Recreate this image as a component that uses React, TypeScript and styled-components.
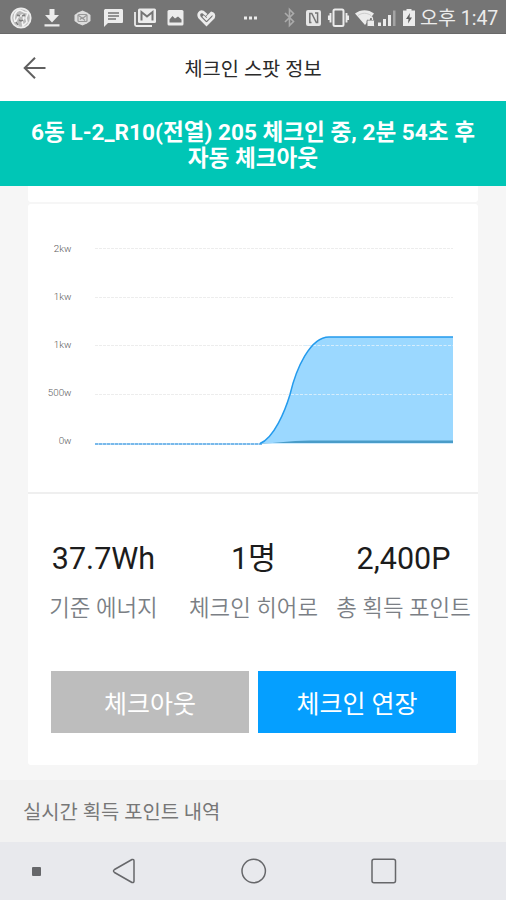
import React from "react";
import styled, { createGlobalStyle } from "styled-components";

const GlobalStyle = createGlobalStyle`
  * { box-sizing: border-box; }
  body { margin: 0; background: #f6f6f6; }
`;

const Screen = styled.div`
  width: 506px;
  height: 900px;
  display: flex;
  flex-direction: column;
  overflow: hidden;
  background: #f6f6f6;
  font-family: Roboto, "Noto Sans CJK KR", sans-serif;
`;

const StatusBar = styled.div`
  height: 34px;
  flex: none;
  display: flex;
  align-items: center;
  background: #757575;
  border-bottom: 1px solid #696969;
  color: #ececec;
`;

const StatusIcon = styled.svg<{ $gap: number }>`
  flex: none;
  height: 22px;
  margin-left: ${(p) => p.$gap}px;
  margin-top: 2px;
  overflow: visible;
`;

const Clock = styled.span`
  margin-left: 5px;
  margin-top: 4px;
  font: 400 19.5px/30px Roboto, "Noto Sans CJK KR", sans-serif;
  white-space: nowrap;
`;

const AppBar = styled.header`
  height: 67px;
  flex: none;
  display: grid;
  grid-template-columns: 70px 1fr 70px;
  align-items: center;
  background: #fff;
`;

const BackButton = styled.button`
  display: flex;
  width: 24px;
  height: 24px;
  margin-left: 22px;
  padding: 0;
  border: 0;
  background: none;
`;

const Title = styled.h1`
  margin: 0;
  padding-top: 4px;
  text-align: center;
  color: #2a2a2a;
  font-size: 19.8px;
  line-height: 28px;
  font-weight: 400;
`;

const Banner = styled.div`
  height: 85px;
  flex: none;
  padding: 19px 20px 0;
  background: #00c6b6;
  color: #fff;
  text-align: center;
  font-size: 22.6px;
  line-height: 26px;
  font-weight: 700;
  white-space: nowrap;
`;

const Content = styled.main`
  height: 594px;
  flex: none;
  padding: 0 28px;
`;

const CardEnd = styled.div`
  height: 16px;
  background: #fff;
  border-radius: 0 0 3px 3px;
`;

const Card = styled.section`
  margin-top: 2px;
  height: 561px;
  background: #fff;
  border-radius: 3px;
`;

const ChartPanel = styled.div`
  height: 290px;
  border-bottom: 2px solid #efefef;
`;

const Chart = styled.svg`
  display: block;
  width: 450px;
  height: 288px;
`;

const ChartLabel = styled.text`
  fill: #5c5c5c;
  font-family: Roboto, sans-serif;
  font-size: 9.8px;
  font-weight: 300;
  text-anchor: end;
`;

const Stats = styled.div`
  display: grid;
  grid-template-columns: 150px 150px 150px;
  padding-top: 46px;
`;

const Stat = styled.div`
  padding-left: 1px;
  text-align: center;
  white-space: nowrap;
`;

const StatValue = styled.div`
  height: 38px;
  color: #1c1c1c;
  font-size: 30.5px;
  line-height: 38px;
  font-weight: 400;
`;

const StatLabel = styled.div`
  margin-top: 15px;
  height: 30px;
  color: #7b7f85;
  font-size: 22.4px;
  line-height: 30px;
  font-weight: 350;
`;

const Actions = styled.div`
  display: grid;
  grid-template-columns: 1fr 1fr;
  gap: 9px;
  margin: 48px 22px 0 23px;
`;

const Action = styled.button<{ $primary?: boolean }>`
  height: 62px;
  padding: 5px 0 0;
  border: 0;
  background: ${(p) => (p.$primary ? "#059fff" : "#bdbdbd")};
  color: #fff;
  font: 400 25px/36px Roboto, "Noto Sans CJK KR", sans-serif;
`;

const SectionTitle = styled.h2`
  height: 62px;
  flex: none;
  margin: 0;
  padding: 2px 0 0 23px;
  background: #f2f2f2;
  color: #777;
  font-size: 19.85px;
  line-height: 62px;
  font-weight: 400;
`;

const NavBar = styled.nav`
  height: 58px;
  flex: none;
  display: flex;
  align-items: center;
  padding-left: 32px;
  background: #e8e9ed;
`;

const NavIcon = styled.svg<{ $gap: number }>`
  flex: none;
  margin-left: ${(p) => p.$gap}px;
  fill: none;
  stroke: #66676a;
  stroke-width: 1.5;
  stroke-linejoin: round;
`;

const ticks = [
  { label: "2kw", line: 44.5, base: 48 },
  { label: "1kw", line: 93.5, base: 96 },
  { label: "1kw", line: 141.5, base: 144 },
  { label: "500w", line: 190.5, base: 192 },
  { label: "0w", line: 239.5, base: 240 },
];

const stats = [
  { value: "37.7Wh", label: "기준 에너지" },
  { value: "1명", label: "체크인 히어로" },
  { value: "2,400P", label: "총 획득 포인트" },
];

const loadCurve = "M232 239.5C246 234 257 207 262 190.5C268 165 282 133 301 133H425";

function StatusIcons() {
  return (
    <>
      <StatusIcon $gap={10} width="22" viewBox="0 0 22 22" fill="none">
        <circle cx="11" cy="11" r="9.7" fill="#b9b9b9" stroke="#ececec" strokeWidth="1.8" />
        <path d="M5 15C3 9 5 4 10 3l4 2 4 1-2 5 1 4-4 4-1-5 2-3-2-3-4 2-2 4 2 5" stroke="#f2f2f2" strokeWidth="1.6" />
        <path d="M7 8l3 1m2 0l3-1M9 13l2 1 2-1M6 15l2 3" stroke="#7e7e7e" strokeWidth="1.4" />
      </StatusIcon>
      <StatusIcon $gap={12} width="16" viewBox="0 0 16 22" fill="currentColor">
        <path d="M5.5 2h5v6H15l-7 7.5L1 8h4.500zM.5 17.300h15v2.200H.5z" />
      </StatusIcon>
      <StatusIcon $gap={14} width="17" viewBox="0 0 17 22">
        <path d="M4 5.500 8.500 3.500 13 5.500 16.500 8v6L13 16.500 8.500 18.500 4 16.500.5 14V8z" fill="#dcdcdc" />
        <rect x="4" y="7.500" width="9" height="7" rx="1" fill="none" stroke="#999" strokeWidth="1.200" />
        <path d="M4 8l4.500 3.500L13 8M6 12.500l2-2 3 3" fill="none" stroke="#999" strokeWidth="1.200" />
      </StatusIcon>
      <StatusIcon $gap={13} width="19" viewBox="0 0 19 22">
        <path d="M2 2h15.500c1 0 1.500.6 1.500 1.500v11c0 1-.5 1.500-1.500 1.500H4l-4 4V3.500C0 2.600.7 2 2 2z" fill="currentColor" />
        <path d="M4 6h11M4 9h11M4 12h8" stroke="#757575" strokeWidth="1.500" />
      </StatusIcon>
      <StatusIcon $gap={11} width="22" viewBox="0 0 22 22">
        <path d="M1 5v12.500c0 1 .5 1.500 1.500 1.500H18" fill="none" stroke="currentColor" strokeWidth="1.800" />
        <rect x="4" y="1.500" width="18" height="14.500" rx="1.500" fill="currentColor" />
        <path d="M7.500 13.500V5l5.500 4.500L18.500 5v8.500" fill="none" stroke="#757575" strokeWidth="2" />
      </StatusIcon>
      <StatusIcon $gap={11} width="17" viewBox="0 0 17 22">
        <rect x=".5" y="3" width="16" height="15.500" rx="1.500" fill="currentColor" />
        <path d="M2.500 15.500v-3L5.500 9l2.500 2.500 3-2 3.500 3v3z" fill="#757575" />
      </StatusIcon>
      <StatusIcon $gap={13} width="19" viewBox="0 0 19 22" fill="none">
        <path d="M10 10.500l4.500-4.500c1.800.4 3 2 2 4.500L9.500 17.500 2.500 10.500C.5 7 3 4 6 5l3.500 3" stroke="currentColor" strokeWidth="2.800" />
        <path d="M6 9l3.500 3.500L15 7" stroke="currentColor" strokeWidth="2" />
      </StatusIcon>
      <StatusIcon $gap={28} width="13" viewBox="0 0 13 22" fill="currentColor">
        <path d="M0 9.500h3v3H0zM5 9.500h3v3H5zM10 9.500h3v3h-3z" />
      </StatusIcon>
      <StatusIcon $gap={27} width="11" viewBox="0 0 11 22" fill="none">
        <path d="M1 6l8.500 8.500L5.500 18.500v-16l4 4L1 15" stroke="#ababab" strokeWidth="1.600" />
      </StatusIcon>
      <StatusIcon $gap={11} width="15" viewBox="0 0 15 22">
        <rect y="3" width="15" height="16" rx="2" fill="#e6e6e6" />
        <path d="M5.500 15.500H3.800V6.500h2l4.500 9h1.300V6H9" fill="none" stroke="#757575" strokeWidth="1.500" />
      </StatusIcon>
      <StatusIcon $gap={7} width="21" viewBox="0 0 21 22" fill="none" stroke="currentColor">
        <rect x="5.500" y="2.500" width="10" height="16.500" rx="1.500" strokeWidth="2" />
        <path d="M2.500 6v9.500M18.500 6v9.500M.9 8.500v4.500M20.100 8.500v4.500" strokeWidth="1.900" />
      </StatusIcon>
      <StatusIcon $gap={6} width="20" viewBox="0 0 20 22">
        <path d="M0 6.500C5.500 2 13.500 2 19 6.500L10 18z" fill="currentColor" />
        <path d="M3 8.500c4-3 9-3 13 0" fill="none" stroke="#c4c4c4" strokeWidth=".8" />
        <rect x="12" y="13" width="7.500" height="6.500" rx="1" fill="#ececec" stroke="#757575" />
        <path d="M14 13v-1.500c0-2 3.500-2 3.500 0V13" fill="none" stroke="#ececec" strokeWidth="1.300" />
      </StatusIcon>
      <StatusIcon $gap={3} width="18" viewBox="0 0 18 22">
        <path d="M0 15.500h3V19H0zM5 12h3v7H5zM10 8h3v11h-3z" fill="currentColor" />
        <path d="M15 3.500h2.500V19H15z" fill="#a4a4a4" />
      </StatusIcon>
      <StatusIcon $gap={7} width="12" viewBox="0 0 12 22">
        <path d="M3.500 2h5v1.500H12V19H0V3.500h3.500z" fill="currentColor" />
        <path d="M7 6l-4 6h2.500L5 16.500l4-6H6.500z" fill="#606060" />
      </StatusIcon>
    </>
  );
}

export default function App() {
  return (
    <Screen>
      <GlobalStyle />
      <StatusBar>
        <StatusIcons />
        <Clock>오후 1:47</Clock>
      </StatusBar>
      <AppBar>
        <BackButton aria-label="뒤로">
          <svg width="24" height="24" viewBox="0 0 24 24" fill="none" stroke="#606060" strokeWidth="2">
            <path d="M23.500 12H2.500M13 1.800 2.700 12 13 22.200" />
          </svg>
        </BackButton>
        <Title>체크인 스팟 정보</Title>
      </AppBar>
      <Banner>
        6동 L-2_R10(전열) 205 체크인 중, 2분 54초 후
        <br />
        자동 체크아웃
      </Banner>
      <Content>
        <CardEnd />
        <Card>
          <ChartPanel>
            <Chart viewBox="0 0 450 288">
              {ticks.map((t) => (
                <ChartLabel key={t.label + t.line} x="43.500" y={t.base}>
                  {t.label}
                </ChartLabel>
              ))}
              {ticks.slice(0, 4).map((t) => (
                <path key={t.line} d={`M67 ${t.line}H425`} stroke="#ededed" strokeDasharray="3 1" />
              ))}
              <path d={`${loadCurve}V239.5Z`} fill="#9bd8ff" />
              <path d="M232 239.500C250 239.500 260 236.500 282 236.500H425V239H232Z" fill="#4a9cc8" />
              <path d="M276 141.500H425M263 190.500H425" stroke="#d5edfc" strokeDasharray="3 1.500" />
              <path d="M67 240H234" stroke="#b5daf8" strokeWidth="2" />
              <path d="M67 240H234" stroke="#3f97dc" strokeWidth="1.200" strokeDasharray="3 1" />
              <path d={loadCurve} fill="none" stroke="#249bed" strokeWidth="1.500" />
            </Chart>
          </ChartPanel>
          <Stats>
            {stats.map((s) => (
              <Stat key={s.label}>
                <StatValue>{s.value}</StatValue>
                <StatLabel>{s.label}</StatLabel>
              </Stat>
            ))}
          </Stats>
          <Actions>
            <Action>체크아웃</Action>
            <Action $primary>체크인 연장</Action>
          </Actions>
        </Card>
      </Content>
      <SectionTitle>실시간 획득 포인트 내역</SectionTitle>
      <NavBar>
        <NavIcon $gap={0} width="9" height="9" viewBox="0 0 9 9">
          <rect width="9" height="9" rx="1" fill="#66676a" stroke="none" />
        </NavIcon>
        <NavIcon $gap={71} width="24" height="26" viewBox="0 0 24 26">
          <path d="M20 1.500 2.500 11.500Q.5 13 2.500 14.500L20 24.500Q22 25 22 23V3Q22 1 20 1.500Z" />
        </NavIcon>
        <NavIcon $gap={105} width="26" height="26" viewBox="0 0 26 26">
          <circle cx="12.700" cy="13" r="11.700" />
        </NavIcon>
        <NavIcon $gap={104} width="26" height="26" viewBox="0 0 26 26">
          <rect x="1" y="1.300" width="23.500" height="23.500" rx="2" />
        </NavIcon>
      </NavBar>
    </Screen>
  );
}
